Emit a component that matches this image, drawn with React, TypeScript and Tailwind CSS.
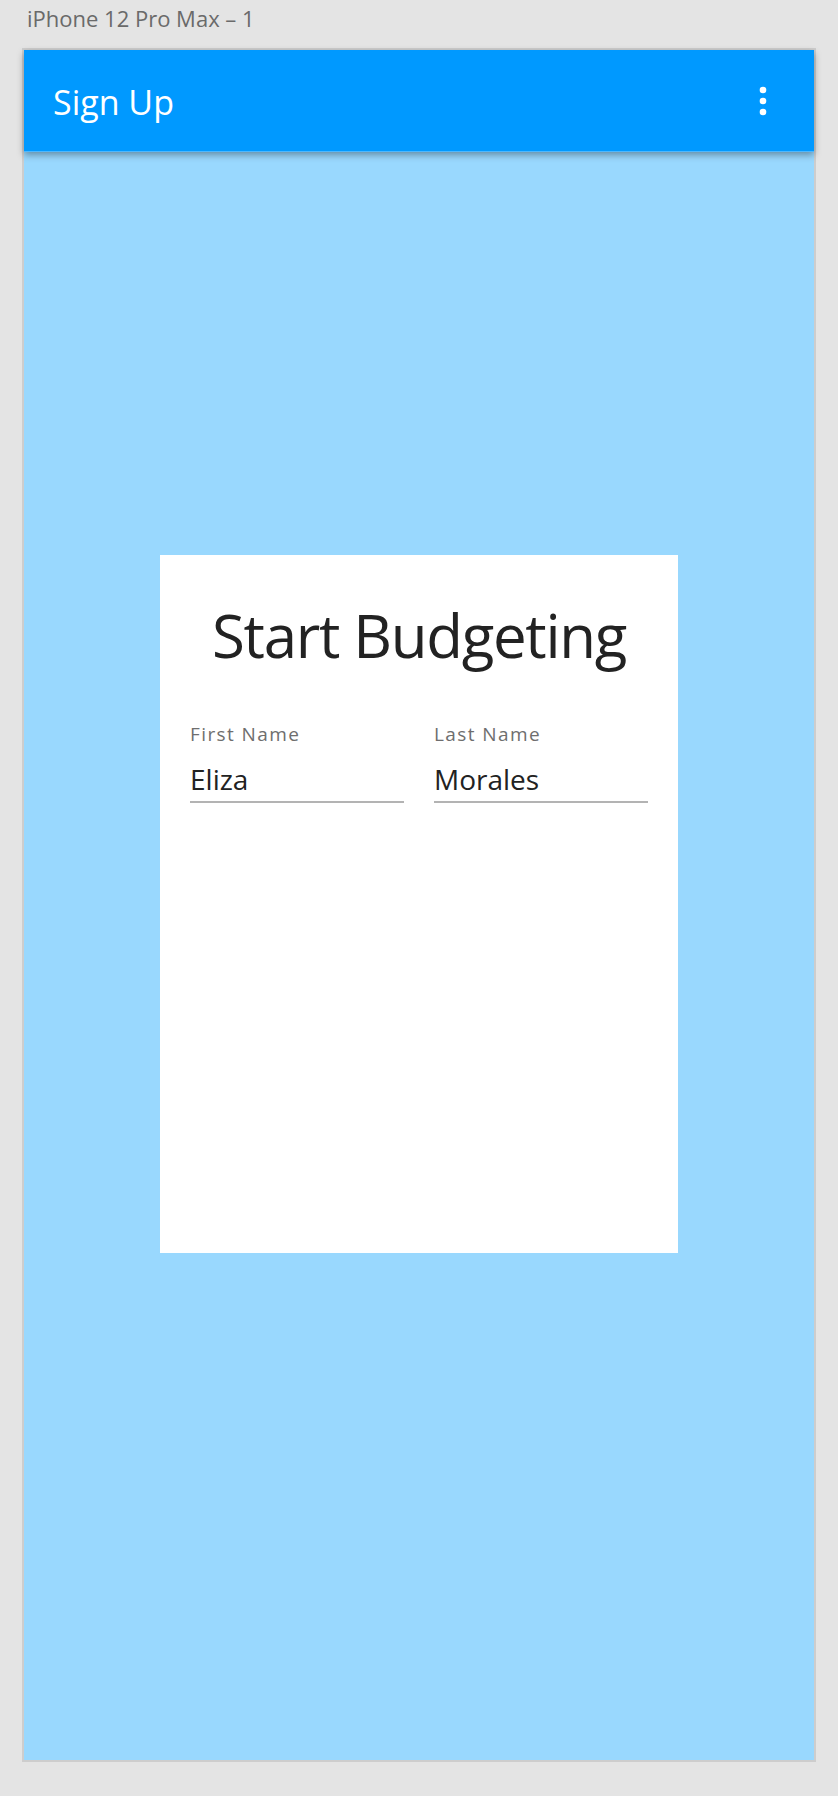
import React from "react";

function Field({ label, value }: { label: string; value: string }) {
  return (
    <div className="flex flex-col">
      <div className="text-[19px] leading-[24px] tracking-[1.4px] text-[#6e6e6e]">{label}</div>
      <div className="mt-[15px] pb-[4px] border-b-2 border-[#b3b3b3] text-[28px] leading-[36px] text-[#222222]">
        {value}
      </div>
    </div>
  );
}

export default function App() {
  return (
    <div
      className="w-[838px] h-[1796px] bg-[#e4e4e4] overflow-hidden"
      style={{ fontFamily: '"Open Sans", "Liberation Sans", sans-serif' }}
    >
      <div className="h-[48px] pt-[4px] pl-[27px] text-[22px] leading-[29px] text-[#6a6a6a]">
        iPhone 12 Pro Max – 1
      </div>
      <div className="ml-[22px] w-[794px] h-[1714px] border-2 border-[#cdcdcd] bg-[#99d8fe] flex flex-col">
        <div className="relative z-10 h-[102px] shrink-0 bg-[#0099ff] border-b border-[#4db8ff] shadow-[0_3px_7px_rgba(0,0,0,0.35)] flex items-center pl-[29px] pr-[47px]">
          <div className="pt-[2px] text-[34px] leading-[34px] font-medium text-white">Sign Up</div>
          <svg className="ml-auto" width="8" height="30" viewBox="0 0 8 30">
            <circle cx="4" cy="4" r="3.3" fill="#ffffff" />
            <circle cx="4" cy="15" r="3.3" fill="#ffffff" />
            <circle cx="4" cy="26" r="3.3" fill="#ffffff" />
          </svg>
        </div>
        <div className="mt-[403px] ml-[136px] w-[518px] h-[698px] bg-white flex flex-col">
          <div className="pt-[50px] text-center text-[60px] leading-[60px] font-normal tracking-[-1.3px] text-[#222222]">
            Start Budgeting
          </div>
          <div className="mt-[57px] px-[30px] grid grid-cols-2 gap-[30px]">
            <Field label="First Name" value="Eliza" />
            <Field label="Last Name" value="Morales" />
          </div>
        </div>
      </div>
    </div>
  );
}
